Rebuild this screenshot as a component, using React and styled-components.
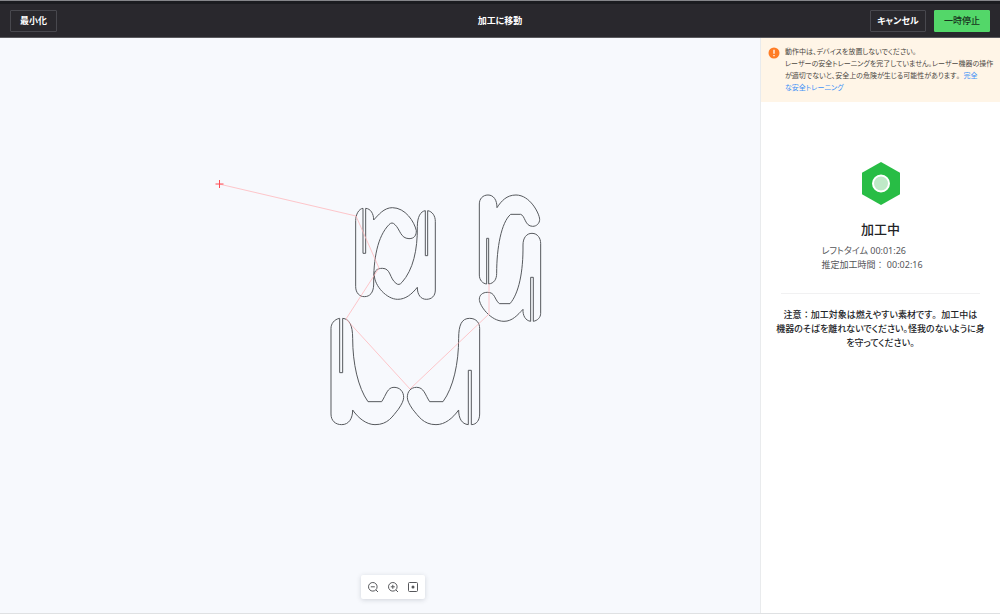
import React from "react";
import styled, { createGlobalStyle } from "styled-components";

const GlobalStyle = createGlobalStyle`
  * { box-sizing: border-box; }
  body {
    margin: 0;
    font-family: "Noto Sans", "Noto Sans CJK JP", sans-serif;
    font-feature-settings: "palt";
    color: #222326;
  }
  button { font: inherit; font-feature-settings: inherit; cursor: pointer; }
`;

const Page = styled.div`
  display: flex;
  flex-direction: column;
  min-height: 100vh;
  border-bottom: 1px solid #dfe1e3;
`;

const Header = styled.header`
  display: grid;
  grid-template-columns: 1fr auto 1fr;
  align-items: center;
  height: 38px;
  padding: 4px 10px 0;
  background: linear-gradient(#85868a 1px, #1b1c20 1px, #1b1c20 4px, #29282d 4px);
  border-bottom: 1px solid #5a5a5e;
`;

const Title = styled.h1`
  margin: 0;
  color: #fff;
  font-size: 9px;
  line-height: 12px;
  font-weight: 700;
`;

const Actions = styled.div`
  display: flex;
  gap: 8px;
  justify-content: ${(p) => (p.$end ? "flex-end" : "flex-start")};
`;

const HeaderButton = styled.button`
  width: ${(p) => (p.$narrow ? "47px" : "56px")};
  height: 22px;
  padding: 0;
  border: 1px solid ${(p) => (p.$primary ? "#53d769" : "#48484e")};
  border-radius: 1px;
  background: ${(p) => (p.$primary ? "#53d769" : "transparent")};
  color: ${(p) => (p.$primary ? "#17331d" : "#fff")};
  font-size: 9px;
  line-height: 12px;
  font-weight: ${(p) => (p.$primary ? 500 : 700)};
`;

const Main = styled.main`
  display: flex;
  flex: 1;
`;

const Canvas = styled.section`
  position: relative;
  flex: 1;
  display: flex;
  justify-content: center;
  align-items: flex-end;
  padding: 0 0 14px 26px;
  background: #f7f9fd;
`;

const Drawing = styled.svg`
  position: absolute;
  left: 200px;
  top: 132px;
  fill: none;
`;

const Toolbar = styled.div`
  display: flex;
  gap: 4px;
  padding: 4px;
  background: #fff;
  border-radius: 2px;
  box-shadow: 0 1px 5px rgba(40, 45, 60, 0.18);
`;

const ToolButton = styled.button`
  display: grid;
  place-items: center;
  width: 16px;
  height: 16px;
  padding: 0;
  border: 0;
  background: none;
  color: #56575b;
`;

const ToolIcon = styled.svg`
  fill: none;
  stroke: currentColor;
`;

const Side = styled.aside`
  width: 240px;
  border-left: 1px solid #e9ebed;
  background: #fff;
`;

const Warning = styled.div`
  display: flex;
  gap: 5px;
  padding: 8px 8px 8px 7px;
  background: #fff5e7;
  color: #4c4843;
  font-size: 7px;
  line-height: 12px;
`;

const WarningIcon = styled.svg`
  flex: none;
  margin-top: 1px;
`;

const WarningText = styled.p`
  margin: 0;
  white-space: nowrap;
`;

const TextLink = styled.a`
  color: #4091f7;
  text-decoration: none;
`;

const FullWidth = styled.span`
  font-feature-settings: normal;
`;

const Status = styled.section`
  display: flex;
  flex-direction: column;
  align-items: center;
  margin: 0 20px;
  padding: 60px 0 21px;
  border-bottom: 1px solid #f1f1f2;
`;

const StatusTitle = styled.h2`
  margin: 14px 0 5px;
  font-size: 13px;
  line-height: 20px;
  font-weight: 500;
`;

const Times = styled.p`
  width: 118px;
  margin: 0;
  color: #55565a;
  font-size: 9px;
  line-height: 14px;
  white-space: nowrap;
`;

const Note = styled.p`
  margin: 14px 12px;
  font-size: 9px;
  line-height: 14px;
  font-weight: 500;
  text-align: center;
  white-space: nowrap;
`;

function LaserPaths() {
  return (
    <Drawing width="350" height="260" viewBox="200 170 350 260" aria-label="加工パス">
      <g stroke="#55585c" strokeWidth="3">
        <g transform="translate(345 190) scale(.3333)">
          <path d="M32 92V290C32 309 44 320 58 320C75 320 85 308 86 285C85 205 98 139 132 104Q141 94 150 104C166 119 166 145 192 146C209 146 214 135 214 122C208 95 181 53 142 53C117 53 100 75 86 90C86 71 77 56 62 55V190H54V55C42 56 32 73 32 92Z" />
          <path d="M217 292C200 313 182 328 158 328C125 328 88 287 88 255C88 241 98 235 112 235C138 235 133 265 153 280Q162 288 171 277C204 240 218 180 217 110C217 80 227 64 241 62V197H248V62C262 64 271 78 271 94V300C271 318 260 328 244 328C228 328 217 315 217 292Z" />
        </g>
        <g transform="translate(470 185) scale(.3333)">
          <path d="M28 57V270C28 285 38 296 50 297V160H56V297C72 295 80 283 80 265C80 188 94 112 122 88H152C166 92 164 124 188 124C200 124 209 115 209 103C208 85 180 30 138 30C110 30 94 48 81 68C81 45 71 30 54 30C38 30 28 42 28 57Z" />
          <path d="M159 373C143 390 127 409 102 409C61 409 28 361 28 343C28 330 38 322 52 322C76 322 72 342 88 356H120C146 326 160 262 159 180C159 158 170 145 186 145C203 145 212 160 212 175V385C212 398 202 407 190 409V277H182V409C166 407 158 391 159 373Z" />
        </g>
        <g transform="translate(320 310) scale(.3333)">
          <path d="M33 55V312C33 332 46 344 65 344C87 344 98 325 98 300C115 325 140 344 165 344C205 344 218 318 235 298C245 283 251 272 251 262C251 245 240 232 222 232C202 232 199 254 185 275H144C114 233 98 160 98 85C98 45 88 27 68 25V188H59V25C42 28 33 42 33 55Z" />
          <path d="M479 55V312C479 330 470 344 454 344V181H445V344C425 342 416 325 416 300C398 325 375 344 348 344C310 344 295 318 278 298C268 283 262 272 262 262C262 245 272 232 290 232C312 232 315 254 329 275H369C400 233 416 160 416 85C416 45 425 25 449 25C470 25 479 40 479 55Z" />
        </g>
      </g>
      <path d="M219 184L356 216L379 268L346 319L410 389L489 314V284" stroke="#ffb4b8" strokeWidth="1" opacity=".75" />
      <path d="M215.500 184H223.500M219.500 180V188" stroke="#ff4d55" />
    </Drawing>
  );
}

function ZoomIcon({ plus }) {
  return (
    <ToolIcon width="12" height="12" viewBox="0 0 12 12">
      <circle cx="5.800" cy="5.800" r="4.300" />
      <path d={plus ? "M3.800 5.800h4M5.800 3.800v4M9 9l2 2" : "M3.800 5.800h4M9 9l2 2"} />
    </ToolIcon>
  );
}

export default function App() {
  return (
    <>
      <GlobalStyle />
      <Page>
        <Header>
          <Actions>
            <HeaderButton $narrow>最小化</HeaderButton>
          </Actions>
          <Title>加工に移動</Title>
          <Actions $end>
            <HeaderButton>キャンセル</HeaderButton>
            <HeaderButton $primary>一時停止</HeaderButton>
          </Actions>
        </Header>
        <Main>
          <Canvas>
            <LaserPaths />
            <Toolbar>
              <ToolButton aria-label="縮小"><ZoomIcon /></ToolButton>
              <ToolButton aria-label="拡大"><ZoomIcon plus /></ToolButton>
              <ToolButton aria-label="全体表示">
                <ToolIcon width="12" height="12" viewBox="0 0 12 12">
                  <rect x="1.500" y="1.500" width="9" height="9" rx="1" />
                  <circle cx="6" cy="6" r="1.500" fill="currentColor" stroke="none" />
                </ToolIcon>
              </ToolButton>
            </Toolbar>
          </Canvas>
          <Side>
            <Warning>
              <WarningIcon width="12" height="12" viewBox="0 0 12 12">
                <circle cx="6" cy="6" r="5.500" fill="#ff7d26" />
                <path d="M6 2.800v4M6 8v1.300" stroke="#fff" strokeWidth="1.300" />
              </WarningIcon>
              <WarningText>
                動作中は、デバイスを放置しないでください。<br />
                レーザーの安全トレーニングを完了していません。レーザー機器の操作<br />
                が適切でないと、安全上の危険が生じる可能性があります<FullWidth>。</FullWidth>
                <TextLink href="#training">完全<br />な安全トレーニング</TextLink>
              </WarningText>
            </Warning>
            <Status>
              <svg width="38" height="43" viewBox="0 0 38 43" aria-hidden="true">
                <path d="M19 0L38 10.700V32.300L19 43L0 32.300V10.700Z" fill="#28bd45" />
                <circle cx="19" cy="21.500" r="8" fill="#bfe9c7" stroke="#fff" strokeWidth="2" />
              </svg>
              <StatusTitle>加工中</StatusTitle>
              <Times>
                レフトタイム 00:01:26<br />
                推定加工時間<FullWidth>：</FullWidth> 00:02:16
              </Times>
            </Status>
            <Note>
              注意<FullWidth>：</FullWidth>加工対象は燃えやすい素材です<FullWidth>。</FullWidth>加工中は<br />
              機器のそばを離れないでください。怪我のないように身<br />
              を守ってください。
            </Note>
          </Side>
        </Main>
      </Page>
    </>
  );
}
